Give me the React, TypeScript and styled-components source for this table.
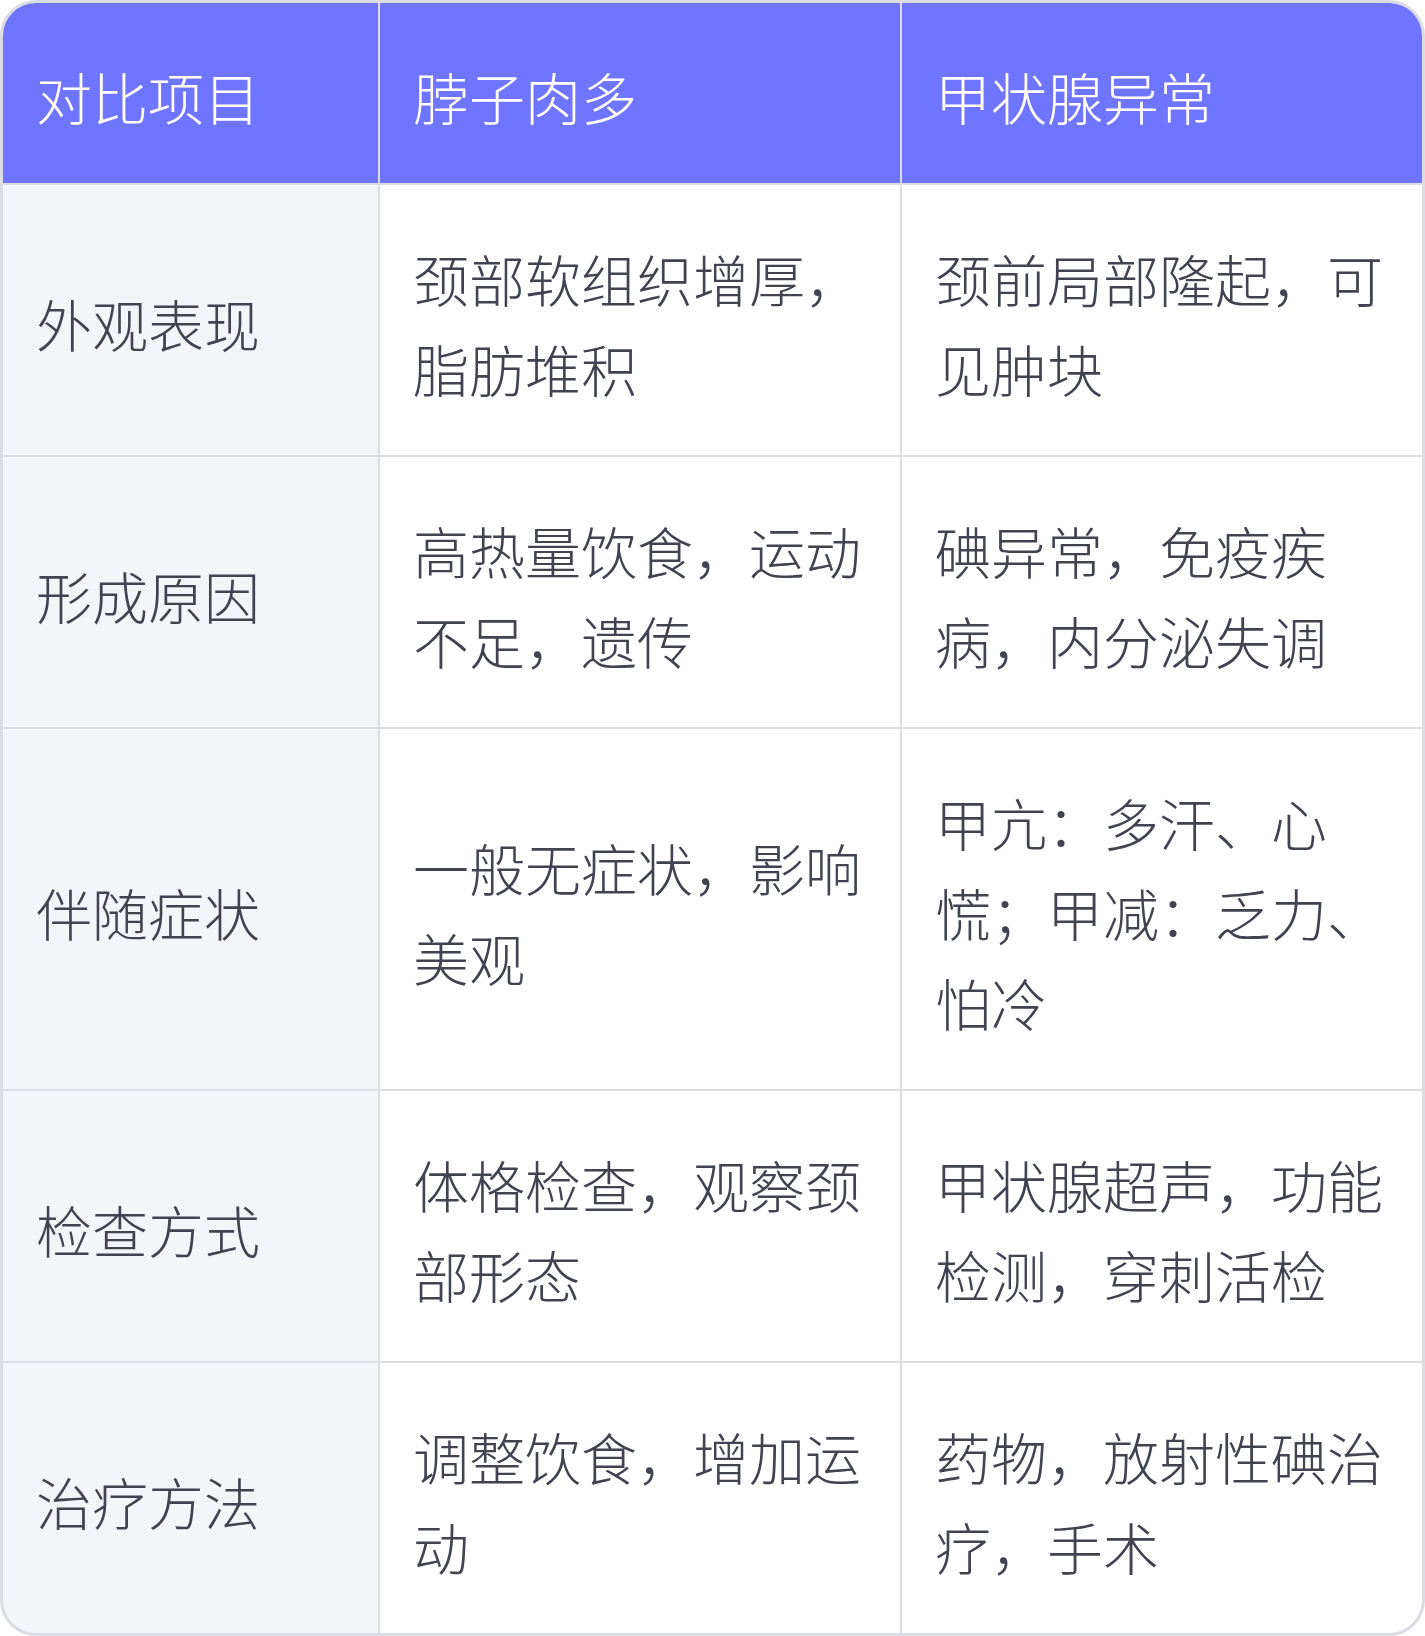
import React from "react";
import styled, { createGlobalStyle } from "styled-components";

const GlobalStyle = createGlobalStyle`
  html, body {
    margin: 0;
    padding: 0;
    background: #ffffff;
  }
  body {
    font-family: "Noto Sans CJK SC", "Noto Sans", sans-serif;
  }
`;

const Table = styled.div`
  box-sizing: border-box;
  width: 1425px;
  display: grid;
  grid-template-columns: 375px 520px 520px;
  gap: 2px;
  background: #dcdde3;
  border: 3px solid #dcdde3;
  border-radius: 36px;
  overflow: hidden;
`;

const Cell = styled.div<{ $variant: "head" | "label" | "body" }>`
  box-sizing: border-box;
  display: flex;
  align-items: center;
  padding: 48px 30px 42px 33px;
  font-size: 56px;
  line-height: 90px;
  font-weight: 300;
  word-break: break-all;
  color: ${(p) => (p.$variant === "head" ? "#ffffff" : "#41444f")};
  background: ${(p) =>
    p.$variant === "head" ? "#7075ff" : p.$variant === "label" ? "#f4f5f9" : "#ffffff"};
`;

const CellText = styled.div`
  width: 100%;
`;

const headers = ["对比项目", "脖子肉多", "甲状腺异常"];

const rows: [string, string, string][] = [
  ["外观表现", "颈部软组织增厚，脂肪堆积", "颈前局部隆起，可见肿块"],
  ["形成原因", "高热量饮食，运动不足，遗传", "碘异常，免疫疾病，内分泌失调"],
  ["伴随症状", "一般无症状，影响美观", "甲亢：多汗、心慌；甲减：乏力、怕冷"],
  ["检查方式", "体格检查，观察颈部形态", "甲状腺超声，功能检测，穿刺活检"],
  ["治疗方法", "调整饮食，增加运动", "药物，放射性碘治疗，手术"],
];

export default function App() {
  return (
    <>
      <GlobalStyle />
      <Table>
        {headers.map((h) => (
          <Cell key={h} $variant="head">
            <CellText>{h}</CellText>
          </Cell>
        ))}
        {rows.map((r) => (
          <React.Fragment key={r[0]}>
            <Cell $variant="label">
              <CellText>{r[0]}</CellText>
            </Cell>
            <Cell $variant="body">
              <CellText>{r[1]}</CellText>
            </Cell>
            <Cell $variant="body">
              <CellText>{r[2]}</CellText>
            </Cell>
          </React.Fragment>
        ))}
      </Table>
    </>
  );
}
